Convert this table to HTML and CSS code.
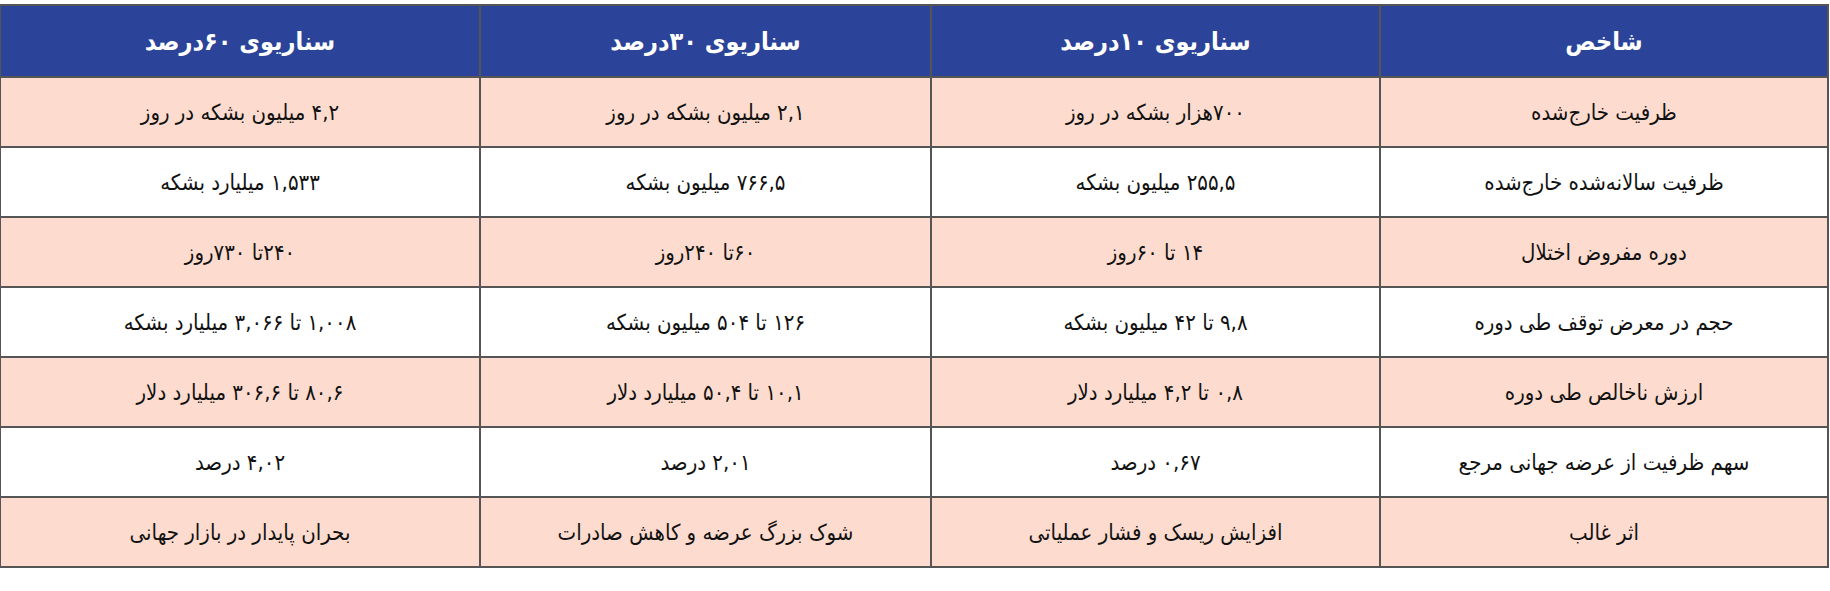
FILE: index.html
```html
<!DOCTYPE html>
<html lang="fa" dir="rtl">
<head>
<meta charset="utf-8">
<title>سناریوها</title>
<link rel="stylesheet" href="styles.css">
</head>
<body>
<div class="wrap">
<table class="grid">
<colgroup>
<col class="c-label">
<col class="c-10">
<col class="c-30">
<col class="c-60">
</colgroup>
<thead>
<tr class="head">
<th>شاخص</th>
<th>سناریوی ۱۰درصد</th>
<th>سناریوی ۳۰درصد</th>
<th>سناریوی ۶۰درصد</th>
</tr>
</thead>
<tbody>
<tr class="odd">
<td>ظرفیت خارج‌شده</td>
<td>۷۰۰هزار بشکه در روز</td>
<td>۲,۱ میلیون بشکه در روز</td>
<td>۴,۲ میلیون بشکه در روز</td>
</tr>
<tr class="even">
<td>ظرفیت سالانه‌شده خارج‌شده</td>
<td>۲۵۵,۵ میلیون بشکه</td>
<td>۷۶۶,۵ میلیون بشکه</td>
<td>۱,۵۳۳ میلیارد بشکه</td>
</tr>
<tr class="odd">
<td>دوره مفروض اختلال</td>
<td>۱۴ تا ۶۰روز</td>
<td>۶۰تا ۲۴۰روز</td>
<td>۲۴۰تا ۷۳۰روز</td>
</tr>
<tr class="even">
<td>حجم در معرض توقف طی دوره</td>
<td>۹,۸ تا ۴۲ میلیون بشکه</td>
<td>۱۲۶ تا ۵۰۴ میلیون بشکه</td>
<td>۱,۰۰۸ تا ۳,۰۶۶ میلیارد بشکه</td>
</tr>
<tr class="odd">
<td>ارزش ناخالص طی دوره</td>
<td>۰,۸ تا ۴,۲ میلیارد دلار</td>
<td>۱۰,۱ تا ۵۰,۴ میلیارد دلار</td>
<td>۸۰,۶ تا ۳۰۶,۶ میلیارد دلار</td>
</tr>
<tr class="even">
<td>سهم ظرفیت از عرضه جهانی مرجع</td>
<td>۰,۶۷ درصد</td>
<td>۲,۰۱ درصد</td>
<td>۴,۰۲ درصد</td>
</tr>
<tr class="odd">
<td>اثر غالب</td>
<td>افزایش ریسک و فشار عملیاتی</td>
<td>شوک بزرگ عرضه و کاهش صادرات</td>
<td>بحران پایدار در بازار جهانی</td>
</tr>
</tbody>
</table>
</div>
</body>
</html>
```
FILE: styles.css
```css
html, body {
  margin: 0;
  padding: 0;
  background: #ffffff;
}
body {
  font-family: "DejaVu Sans Condensed", "DejaVu Sans", sans-serif;
  color: #111111;
}
.wrap {
  padding: 4px 1px 0 1px;
}
.grid {
  width: 1828px;
  border-collapse: collapse;
  table-layout: fixed;
}
.c-label { width: 448px; }
.c-10 { width: 449px; }
.c-30 { width: 451px; }
.c-60 { width: 480px; }
.grid th,
.grid td {
  border: 2px solid #555555;
  text-align: center;
  vertical-align: middle;
  padding: 0;
}
.grid th {
  height: 70px;
  background: #2b4499;
  color: #ffffff;
  font-size: 25px;
  font-weight: bold;
}
.grid td {
  height: 68px;
  font-size: 22px;
}
.odd td { background: #fddccf; }
.even td { background: #ffffff; }
```
